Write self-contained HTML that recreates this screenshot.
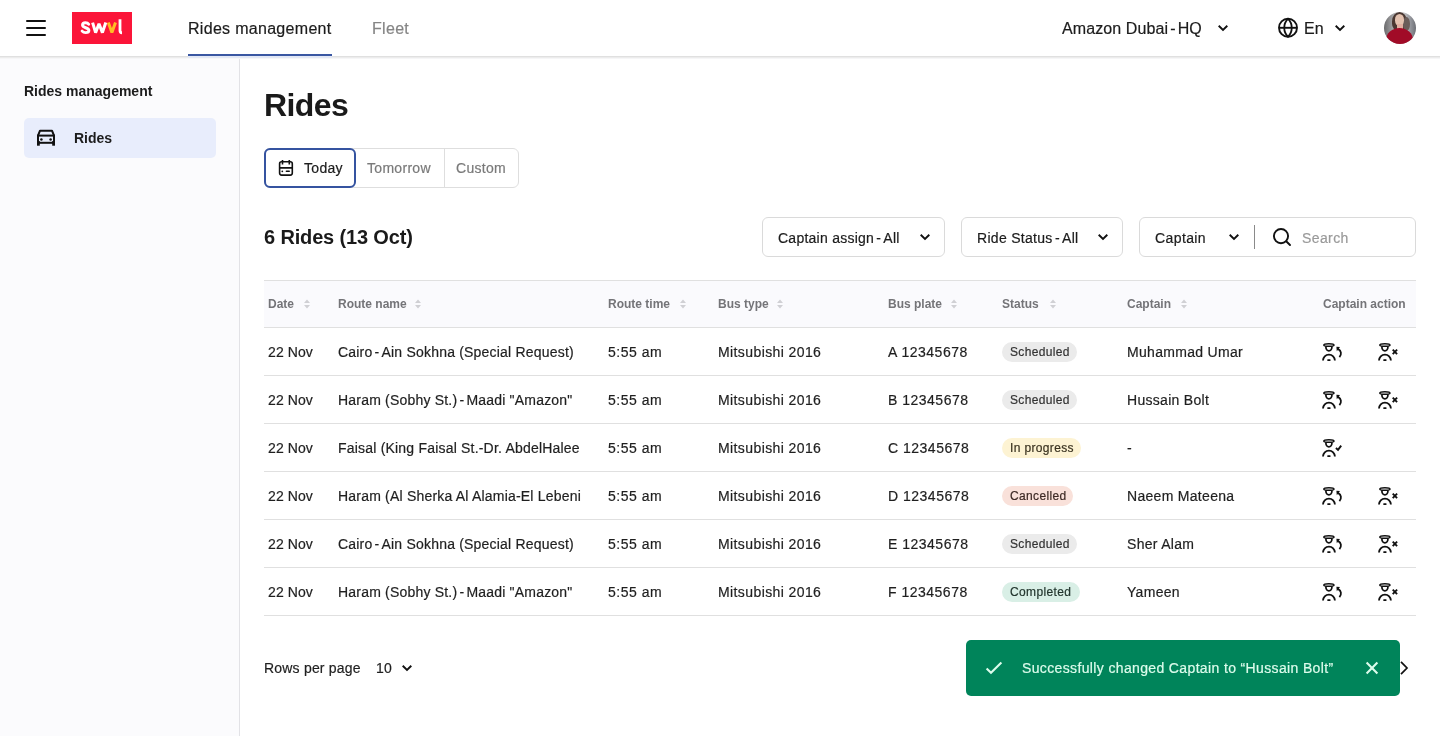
<!DOCTYPE html>
<html><head><meta charset="utf-8">
<style>
*{margin:0;padding:0;box-sizing:border-box}
html,body{width:1440px;height:736px;overflow:hidden;background:#fff;font-family:"Liberation Sans",sans-serif;color:#1c1c1c}
.a{position:absolute}
.t{position:absolute;white-space:nowrap;line-height:1;-webkit-text-stroke:0.2px currentColor}
#root{position:absolute;left:0;top:0;width:1440px;height:736px;will-change:transform}
svg{position:absolute;overflow:visible}
</style></head><body><div id="root">

<div class="a" style="left:0;top:56px;width:240px;height:680px;background:#fbfbfd"></div>
<div class="a" style="left:239px;top:56px;width:1px;height:680px;background:#e2e2e6"></div>
<div class="a" style="left:0;top:0;width:1440px;height:56px;background:#fff"></div>
<div class="a" style="left:0;top:56px;width:1440px;height:1px;background:#e0e0e0"></div>
<div class="a" style="left:0;top:57px;width:1440px;height:1px;background:#ececec"></div>
<div class="a" style="left:0;top:58px;width:1440px;height:1px;background:#f6f6f7"></div>
<div class="a" style="left:26px;top:20px;width:20px;height:2px;background:#111;border-radius:1px"></div>
<div class="a" style="left:26px;top:27px;width:20px;height:2px;background:#111;border-radius:1px"></div>
<div class="a" style="left:26px;top:34px;width:20px;height:2px;background:#111;border-radius:1px"></div>
<div class="a" style="left:72px;top:12px;width:60px;height:32px;background:#fb1539"></div>
<svg style="left:0;top:0" width="140" height="50" viewBox="0 0 140 50"><path d="M88.7 24.2 C87.9 23 86.6 22.7 85.5 22.7 C83.6 22.7 82.5 23.7 82.5 25.1 C82.5 28.5 88.9 27 88.9 30.5 C88.9 31.9 87.6 32.6 85.6 32.6 C84.2 32.6 83 32.1 82.1 31.1" fill="none" stroke="#fff" stroke-width="2.9" stroke-linecap="round"/><path d="M92.6 22.6 L95.6 32.6 L99 23.8 L102.4 32.6 L105.8 22.6" fill="none" stroke="#fff" stroke-width="3" stroke-linejoin="bevel" stroke-linecap="butt"/><path d="M108.3 22.6 L111.9 32.6 L115.5 22.6" fill="none" stroke="#ffbd24" stroke-width="3" stroke-linejoin="bevel"/><path d="M120 19.2 V30.6 C120 32.2 120.6 32.8 122 32.8" fill="none" stroke="#fff" stroke-width="2.8" stroke-linecap="butt"/></svg>
<div class="t" style="left:188px;top:21px;font-size:16px;letter-spacing:0.3px;color:#1c1c1c">Rides management</div>
<div class="a" style="left:188px;top:54px;width:144px;height:2px;background:#3a57a2"></div>
<div class="a" style="left:188px;top:56px;width:144px;height:2px;background:#e2e8f6"></div>
<div class="t" style="left:372px;top:21px;font-size:16px;letter-spacing:0.3px;color:#858585">Fleet</div>
<div class="t" style="left:1062px;top:21px;font-size:16px;letter-spacing:0.1px;color:#1c1c1c">Amazon Dubai<span style="word-spacing:-2.5px"> - </span>HQ</div>
<svg style="left:1217px;top:24px" width="12" height="8" viewBox="0 0 12 8"><path d="M1.7 1.8 L6 6 L10.3 1.8" fill="none" stroke="#111" stroke-width="1.9"/></svg>
<svg style="left:1278px;top:18px" width="20" height="20" viewBox="0 0 20 20"><circle cx="10" cy="9.8" r="9" fill="none" stroke="#111" stroke-width="1.9"/><path d="M10 0.9 C5 5.5 5 14.1 10 18.7 C15 14.1 15 5.5 10 0.9 Z" fill="none" stroke="#111" stroke-width="1.8"/><path d="M1 9.8 H19" stroke="#111" stroke-width="1.9"/></svg>
<div class="t" style="left:1304px;top:21px;font-size:16px;color:#1c1c1c">En</div>
<svg style="left:1334px;top:24px" width="12" height="8" viewBox="0 0 12 8"><path d="M1.7 1.8 L6 6 L10.3 1.8" fill="none" stroke="#111" stroke-width="1.9"/></svg>
<div class="a" style="left:1384px;top:12px;width:32px;height:32px;border-radius:50%;background:linear-gradient(90deg,#6a6a6c 0%,#a9a9ab 30%,#d9d6d6 55%,#9a9ca2 80%,#6e7076 100%);overflow:hidden">
  <div class="a" style="left:8px;top:0px;width:15px;height:19px;border-radius:50% 50% 40% 40%;background:#4a3832"></div>
  <div class="a" style="left:19px;top:5px;width:7px;height:14px;border-radius:50%;background:#6a5d5a"></div>
  <div class="a" style="left:10.5px;top:2px;width:9.5px;height:11.5px;border-radius:50%;background:#e3c2b0"></div>
  <div class="a" style="left:12.5px;top:12px;width:6px;height:5px;background:#e0b0a2"></div>
  <div class="a" style="left:2px;top:16px;width:27px;height:24px;border-radius:50%;background:#a10b27"></div>
</div>
<div class="t" style="left:24px;top:84px;font-size:14px;font-weight:bold;-webkit-text-stroke:0;color:#1c1c1c">Rides management</div>
<div class="a" style="left:24px;top:118px;width:192px;height:39.5px;border-radius:5px;background:#e8edfc"></div>
<svg style="left:35px;top:128px" width="22" height="20" viewBox="0 0 22 20"><path d="M3 7.6 L5 2.7 H17 L19 7.6" fill="none" stroke="#111" stroke-width="2" stroke-linejoin="round"/><rect x="3" y="7.6" width="16" height="7.2" fill="none" stroke="#111" stroke-width="2"/><rect x="2" y="13" width="2.8" height="4.7" fill="#111"/><rect x="17.2" y="13" width="2.8" height="4.7" fill="#111"/><circle cx="6.4" cy="11.4" r="1.25" fill="#111"/><circle cx="15.6" cy="11.4" r="1.25" fill="#111"/></svg>
<div class="t" style="left:74px;top:131px;font-size:14px;font-weight:bold;-webkit-text-stroke:0;color:#1c1c1c">Rides</div>
<div class="t" style="left:264px;top:89px;font-size:32px;letter-spacing:-0.6px;font-weight:bold;-webkit-text-stroke:0;color:#1a1a1a">Rides</div>
<div class="a" style="left:264px;top:148px;width:255px;height:40px;border:1px solid #dedede;border-radius:6px;background:#fff"></div>
<div class="a" style="left:444px;top:149px;width:1px;height:38px;background:#dedede"></div>
<div class="a" style="left:264px;top:148px;width:92px;height:40px;border:2px solid #3553a0;border-radius:6px;background:#fff"></div>
<svg style="left:277px;top:158px" width="18" height="20" viewBox="0 0 18 20"><rect x="2.6" y="3.8" width="12.7" height="13.3" rx="2" fill="none" stroke="#111" stroke-width="1.6"/><path d="M5.5 2 V6.6 M12.3 2 V6.6 M2.6 9.9 H15.3" stroke="#111" stroke-width="1.6"/><circle cx="5.3" cy="13.3" r="0.9" fill="#111"/><path d="M9.4 13.3 H12.2" stroke="#111" stroke-width="1.6" stroke-linecap="round"/></svg>
<div class="t" style="left:304px;top:161px;font-size:14px;letter-spacing:0.3px;color:#1c1c1c">Today</div>
<div class="t" style="left:367px;top:161px;font-size:14px;letter-spacing:0.3px;color:#7a7a7a">Tomorrow</div>
<div class="t" style="left:456px;top:161px;font-size:14px;letter-spacing:0.3px;color:#7a7a7a">Custom</div>
<div class="t" style="left:264px;top:227px;font-size:20px;letter-spacing:-0.15px;font-weight:bold;-webkit-text-stroke:0;color:#1a1a1a">6 Rides (13 Oct)</div>
<div class="a" style="left:762px;top:217px;width:183px;height:40px;border:1px solid #dadada;border-radius:6px;background:#fff"></div>
<div class="a" style="left:961px;top:217px;width:162px;height:40px;border:1px solid #dadada;border-radius:6px;background:#fff"></div>
<div class="a" style="left:1139px;top:217px;width:277px;height:40px;border:1px solid #dadada;border-radius:6px;background:#fff"></div>
<div class="t" style="left:778px;top:231px;font-size:14px;letter-spacing:0.25px;color:#1c1c1c">Captain assign<span style="word-spacing:-2px"> - </span>All</div>
<svg style="left:919px;top:233px" width="12" height="8" viewBox="0 0 12 8"><path d="M1.7 1.8 L6 6 L10.3 1.8" fill="none" stroke="#111" stroke-width="1.9"/></svg>
<div class="t" style="left:977px;top:231px;font-size:14px;letter-spacing:0.3px;color:#1c1c1c">Ride Status<span style="word-spacing:-2px"> - </span>All</div>
<svg style="left:1097px;top:233px" width="12" height="8" viewBox="0 0 12 8"><path d="M1.7 1.8 L6 6 L10.3 1.8" fill="none" stroke="#111" stroke-width="1.9"/></svg>
<div class="t" style="left:1155px;top:231px;font-size:14px;letter-spacing:0.4px;color:#1c1c1c">Captain</div>
<svg style="left:1228px;top:233px" width="12" height="8" viewBox="0 0 12 8"><path d="M1.7 1.8 L6 6 L10.3 1.8" fill="none" stroke="#111" stroke-width="1.9"/></svg>
<div class="a" style="left:1254px;top:225px;width:1px;height:24px;background:#8a8a8a"></div>
<svg style="left:1272px;top:228px" width="20" height="20" viewBox="0 0 20 20"><circle cx="9" cy="8.1" r="7.1" fill="none" stroke="#111" stroke-width="1.9"/><path d="M14.2 13.3 L18 17" stroke="#111" stroke-width="1.9" stroke-linecap="round"/></svg>
<div class="t" style="left:1302px;top:231px;font-size:14px;letter-spacing:0.4px;color:#9a9a9a">Search</div>
<div class="a" style="left:264px;top:280px;width:1152px;height:48px;background:#fafafd"></div>
<div class="a" style="left:264px;top:280px;width:1152px;height:1px;background:#e0e0e0"></div>
<div class="a" style="left:264px;top:327px;width:1152px;height:1px;background:#e0e0e0"></div>
<div class="t" style="left:268px;top:298px;font-size:12px;font-weight:bold;-webkit-text-stroke:0;color:#747478">Date</div>
<svg style="left:304px;top:299px" width="6" height="10" viewBox="0 0 6 10"><path d="M0 3.9 L3 0.6 L6 3.9 Z" fill="#d0d0d4"/><path d="M0 6.1 L3 9.4 L6 6.1 Z" fill="#d0d0d4"/></svg>
<div class="t" style="left:338px;top:298px;font-size:12px;font-weight:bold;-webkit-text-stroke:0;color:#747478">Route name</div>
<svg style="left:415px;top:299px" width="6" height="10" viewBox="0 0 6 10"><path d="M0 3.9 L3 0.6 L6 3.9 Z" fill="#d0d0d4"/><path d="M0 6.1 L3 9.4 L6 6.1 Z" fill="#d0d0d4"/></svg>
<div class="t" style="left:608px;top:298px;font-size:12px;font-weight:bold;-webkit-text-stroke:0;color:#747478">Route time</div>
<svg style="left:680px;top:299px" width="6" height="10" viewBox="0 0 6 10"><path d="M0 3.9 L3 0.6 L6 3.9 Z" fill="#d0d0d4"/><path d="M0 6.1 L3 9.4 L6 6.1 Z" fill="#d0d0d4"/></svg>
<div class="t" style="left:718px;top:298px;font-size:12px;font-weight:bold;-webkit-text-stroke:0;color:#747478">Bus type</div>
<svg style="left:777px;top:299px" width="6" height="10" viewBox="0 0 6 10"><path d="M0 3.9 L3 0.6 L6 3.9 Z" fill="#d0d0d4"/><path d="M0 6.1 L3 9.4 L6 6.1 Z" fill="#d0d0d4"/></svg>
<div class="t" style="left:888px;top:298px;font-size:12px;font-weight:bold;-webkit-text-stroke:0;color:#747478">Bus plate</div>
<svg style="left:951px;top:299px" width="6" height="10" viewBox="0 0 6 10"><path d="M0 3.9 L3 0.6 L6 3.9 Z" fill="#d0d0d4"/><path d="M0 6.1 L3 9.4 L6 6.1 Z" fill="#d0d0d4"/></svg>
<div class="t" style="left:1002px;top:298px;font-size:12px;font-weight:bold;-webkit-text-stroke:0;color:#747478">Status</div>
<svg style="left:1050px;top:299px" width="6" height="10" viewBox="0 0 6 10"><path d="M0 3.9 L3 0.6 L6 3.9 Z" fill="#d0d0d4"/><path d="M0 6.1 L3 9.4 L6 6.1 Z" fill="#d0d0d4"/></svg>
<div class="t" style="left:1127px;top:298px;font-size:12px;font-weight:bold;-webkit-text-stroke:0;color:#747478">Captain</div>
<svg style="left:1181px;top:299px" width="6" height="10" viewBox="0 0 6 10"><path d="M0 3.9 L3 0.6 L6 3.9 Z" fill="#d0d0d4"/><path d="M0 6.1 L3 9.4 L6 6.1 Z" fill="#d0d0d4"/></svg>
<div class="t" style="left:1323px;top:298px;font-size:12px;font-weight:bold;-webkit-text-stroke:0;color:#747478">Captain action</div>
<div class="t" style="left:268px;top:345px;font-size:14px;letter-spacing:0.1px;color:#1f1f1f">22 Nov</div>
<div class="t" style="left:338px;top:345px;font-size:14px;letter-spacing:0.2px;color:#1f1f1f">Cairo<span style="word-spacing:-2px"> - </span>Ain Sokhna (Special Request)</div>
<div class="t" style="left:608px;top:345px;font-size:14px;letter-spacing:0.5px;color:#1f1f1f">5:55 am</div>
<div class="t" style="left:718px;top:345px;font-size:14px;letter-spacing:0.4px;color:#1f1f1f">Mitsubishi 2016</div>
<div class="t" style="left:888px;top:345px;font-size:14px;letter-spacing:0.5px;color:#1f1f1f">A 12345678</div>
<div class="a" style="left:1002px;top:342px;width:75px;height:20px;border-radius:10px;background:#ebebeb"></div>
<div class="t" style="left:1010px;top:346px;font-size:12px;letter-spacing:0.35px;color:#333333">Scheduled</div>
<div class="t" style="left:1127px;top:345px;font-size:14px;letter-spacing:0.3px;color:#1f1f1f">Muhammad Umar</div>
<svg style="left:1320px;top:340px" width="24" height="24" viewBox="0 0 24 24"><ellipse cx="8.9" cy="5" rx="5.1" ry="1.35" fill="none" stroke="#111" stroke-width="1.5"/><path d="M5.9 6.3 V7 A3 3.9 0 0 0 11.9 7 V6.3" fill="none" stroke="#111" stroke-width="1.75"/><path d="M3 20.6 A5.95 5.95 0 0 1 14.9 20.6" fill="none" stroke="#111" stroke-width="1.85"/><rect x="7.2" y="19.3" width="3.4" height="1.6" rx="0.7" fill="#111"/><path d="M17.6 8.6 C21.6 10.8 21.8 14.4 19.4 17.2" fill="none" stroke="#111" stroke-width="1.8"/><path d="M16.4 6.7 L20 7.1 L16.8 11.2 Z" fill="#111"/></svg>
<svg style="left:1376px;top:340px" width="24" height="24" viewBox="0 0 24 24"><ellipse cx="8.9" cy="5" rx="5.1" ry="1.35" fill="none" stroke="#111" stroke-width="1.5"/><path d="M5.9 6.3 V7 A3 3.9 0 0 0 11.9 7 V6.3" fill="none" stroke="#111" stroke-width="1.75"/><path d="M3 20.6 A5.95 5.95 0 0 1 14.9 20.6" fill="none" stroke="#111" stroke-width="1.85"/><rect x="7.2" y="19.3" width="3.4" height="1.6" rx="0.7" fill="#111"/><path d="M16.7 9.7 L21.1 14.1 M21.1 9.7 L16.7 14.1" fill="none" stroke="#111" stroke-width="1.9"/></svg>
<div class="a" style="left:264px;top:375px;width:1152px;height:1px;background:#e0e0e0"></div>
<div class="t" style="left:268px;top:393px;font-size:14px;letter-spacing:0.1px;color:#1f1f1f">22 Nov</div>
<div class="t" style="left:338px;top:393px;font-size:14px;letter-spacing:0.2px;color:#1f1f1f">Haram (Sobhy St.)<span style="word-spacing:-2px"> - </span>Maadi "Amazon"</div>
<div class="t" style="left:608px;top:393px;font-size:14px;letter-spacing:0.5px;color:#1f1f1f">5:55 am</div>
<div class="t" style="left:718px;top:393px;font-size:14px;letter-spacing:0.4px;color:#1f1f1f">Mitsubishi 2016</div>
<div class="t" style="left:888px;top:393px;font-size:14px;letter-spacing:0.5px;color:#1f1f1f">B 12345678</div>
<div class="a" style="left:1002px;top:390px;width:75px;height:20px;border-radius:10px;background:#ebebeb"></div>
<div class="t" style="left:1010px;top:394px;font-size:12px;letter-spacing:0.35px;color:#333333">Scheduled</div>
<div class="t" style="left:1127px;top:393px;font-size:14px;letter-spacing:0.3px;color:#1f1f1f">Hussain Bolt</div>
<svg style="left:1320px;top:388px" width="24" height="24" viewBox="0 0 24 24"><ellipse cx="8.9" cy="5" rx="5.1" ry="1.35" fill="none" stroke="#111" stroke-width="1.5"/><path d="M5.9 6.3 V7 A3 3.9 0 0 0 11.9 7 V6.3" fill="none" stroke="#111" stroke-width="1.75"/><path d="M3 20.6 A5.95 5.95 0 0 1 14.9 20.6" fill="none" stroke="#111" stroke-width="1.85"/><rect x="7.2" y="19.3" width="3.4" height="1.6" rx="0.7" fill="#111"/><path d="M17.6 8.6 C21.6 10.8 21.8 14.4 19.4 17.2" fill="none" stroke="#111" stroke-width="1.8"/><path d="M16.4 6.7 L20 7.1 L16.8 11.2 Z" fill="#111"/></svg>
<svg style="left:1376px;top:388px" width="24" height="24" viewBox="0 0 24 24"><ellipse cx="8.9" cy="5" rx="5.1" ry="1.35" fill="none" stroke="#111" stroke-width="1.5"/><path d="M5.9 6.3 V7 A3 3.9 0 0 0 11.9 7 V6.3" fill="none" stroke="#111" stroke-width="1.75"/><path d="M3 20.6 A5.95 5.95 0 0 1 14.9 20.6" fill="none" stroke="#111" stroke-width="1.85"/><rect x="7.2" y="19.3" width="3.4" height="1.6" rx="0.7" fill="#111"/><path d="M16.7 9.7 L21.1 14.1 M21.1 9.7 L16.7 14.1" fill="none" stroke="#111" stroke-width="1.9"/></svg>
<div class="a" style="left:264px;top:423px;width:1152px;height:1px;background:#e0e0e0"></div>
<div class="t" style="left:268px;top:441px;font-size:14px;letter-spacing:0.1px;color:#1f1f1f">22 Nov</div>
<div class="t" style="left:338px;top:441px;font-size:14px;letter-spacing:0.2px;color:#1f1f1f">Faisal (King Faisal St.-Dr. AbdelHalee</div>
<div class="t" style="left:608px;top:441px;font-size:14px;letter-spacing:0.5px;color:#1f1f1f">5:55 am</div>
<div class="t" style="left:718px;top:441px;font-size:14px;letter-spacing:0.4px;color:#1f1f1f">Mitsubishi 2016</div>
<div class="t" style="left:888px;top:441px;font-size:14px;letter-spacing:0.5px;color:#1f1f1f">C 12345678</div>
<div class="a" style="left:1002px;top:438px;width:79px;height:20px;border-radius:10px;background:#fdf3d3"></div>
<div class="t" style="left:1010px;top:442px;font-size:12px;letter-spacing:0.35px;color:#3a3320">In progress</div>
<div class="t" style="left:1127px;top:441px;font-size:14px;letter-spacing:0.3px;color:#1f1f1f">-</div>
<svg style="left:1320px;top:436px" width="24" height="24" viewBox="0 0 24 24"><ellipse cx="8.9" cy="5" rx="5.1" ry="1.35" fill="none" stroke="#111" stroke-width="1.5"/><path d="M5.9 6.3 V7 A3 3.9 0 0 0 11.9 7 V6.3" fill="none" stroke="#111" stroke-width="1.75"/><path d="M3 20.6 A5.95 5.95 0 0 1 14.9 20.6" fill="none" stroke="#111" stroke-width="1.85"/><rect x="7.2" y="19.3" width="3.4" height="1.6" rx="0.7" fill="#111"/><path d="M15.9 12.1 L18 13.8 L21.2 9.6" fill="none" stroke="#111" stroke-width="1.9"/></svg>
<div class="a" style="left:264px;top:471px;width:1152px;height:1px;background:#e0e0e0"></div>
<div class="t" style="left:268px;top:489px;font-size:14px;letter-spacing:0.1px;color:#1f1f1f">22 Nov</div>
<div class="t" style="left:338px;top:489px;font-size:14px;letter-spacing:0.2px;color:#1f1f1f">Haram (Al Sherka Al Alamia-El Lebeni</div>
<div class="t" style="left:608px;top:489px;font-size:14px;letter-spacing:0.5px;color:#1f1f1f">5:55 am</div>
<div class="t" style="left:718px;top:489px;font-size:14px;letter-spacing:0.4px;color:#1f1f1f">Mitsubishi 2016</div>
<div class="t" style="left:888px;top:489px;font-size:14px;letter-spacing:0.5px;color:#1f1f1f">D 12345678</div>
<div class="a" style="left:1002px;top:486px;width:71px;height:20px;border-radius:10px;background:#f9e1da"></div>
<div class="t" style="left:1010px;top:490px;font-size:12px;letter-spacing:0.35px;color:#3d2a25">Cancelled</div>
<div class="t" style="left:1127px;top:489px;font-size:14px;letter-spacing:0.3px;color:#1f1f1f">Naeem Mateena</div>
<svg style="left:1320px;top:484px" width="24" height="24" viewBox="0 0 24 24"><ellipse cx="8.9" cy="5" rx="5.1" ry="1.35" fill="none" stroke="#111" stroke-width="1.5"/><path d="M5.9 6.3 V7 A3 3.9 0 0 0 11.9 7 V6.3" fill="none" stroke="#111" stroke-width="1.75"/><path d="M3 20.6 A5.95 5.95 0 0 1 14.9 20.6" fill="none" stroke="#111" stroke-width="1.85"/><rect x="7.2" y="19.3" width="3.4" height="1.6" rx="0.7" fill="#111"/><path d="M17.6 8.6 C21.6 10.8 21.8 14.4 19.4 17.2" fill="none" stroke="#111" stroke-width="1.8"/><path d="M16.4 6.7 L20 7.1 L16.8 11.2 Z" fill="#111"/></svg>
<svg style="left:1376px;top:484px" width="24" height="24" viewBox="0 0 24 24"><ellipse cx="8.9" cy="5" rx="5.1" ry="1.35" fill="none" stroke="#111" stroke-width="1.5"/><path d="M5.9 6.3 V7 A3 3.9 0 0 0 11.9 7 V6.3" fill="none" stroke="#111" stroke-width="1.75"/><path d="M3 20.6 A5.95 5.95 0 0 1 14.9 20.6" fill="none" stroke="#111" stroke-width="1.85"/><rect x="7.2" y="19.3" width="3.4" height="1.6" rx="0.7" fill="#111"/><path d="M16.7 9.7 L21.1 14.1 M21.1 9.7 L16.7 14.1" fill="none" stroke="#111" stroke-width="1.9"/></svg>
<div class="a" style="left:264px;top:519px;width:1152px;height:1px;background:#e0e0e0"></div>
<div class="t" style="left:268px;top:537px;font-size:14px;letter-spacing:0.1px;color:#1f1f1f">22 Nov</div>
<div class="t" style="left:338px;top:537px;font-size:14px;letter-spacing:0.2px;color:#1f1f1f">Cairo<span style="word-spacing:-2px"> - </span>Ain Sokhna (Special Request)</div>
<div class="t" style="left:608px;top:537px;font-size:14px;letter-spacing:0.5px;color:#1f1f1f">5:55 am</div>
<div class="t" style="left:718px;top:537px;font-size:14px;letter-spacing:0.4px;color:#1f1f1f">Mitsubishi 2016</div>
<div class="t" style="left:888px;top:537px;font-size:14px;letter-spacing:0.5px;color:#1f1f1f">E 12345678</div>
<div class="a" style="left:1002px;top:534px;width:75px;height:20px;border-radius:10px;background:#ebebeb"></div>
<div class="t" style="left:1010px;top:538px;font-size:12px;letter-spacing:0.35px;color:#333333">Scheduled</div>
<div class="t" style="left:1127px;top:537px;font-size:14px;letter-spacing:0.3px;color:#1f1f1f">Sher Alam</div>
<svg style="left:1320px;top:532px" width="24" height="24" viewBox="0 0 24 24"><ellipse cx="8.9" cy="5" rx="5.1" ry="1.35" fill="none" stroke="#111" stroke-width="1.5"/><path d="M5.9 6.3 V7 A3 3.9 0 0 0 11.9 7 V6.3" fill="none" stroke="#111" stroke-width="1.75"/><path d="M3 20.6 A5.95 5.95 0 0 1 14.9 20.6" fill="none" stroke="#111" stroke-width="1.85"/><rect x="7.2" y="19.3" width="3.4" height="1.6" rx="0.7" fill="#111"/><path d="M17.6 8.6 C21.6 10.8 21.8 14.4 19.4 17.2" fill="none" stroke="#111" stroke-width="1.8"/><path d="M16.4 6.7 L20 7.1 L16.8 11.2 Z" fill="#111"/></svg>
<svg style="left:1376px;top:532px" width="24" height="24" viewBox="0 0 24 24"><ellipse cx="8.9" cy="5" rx="5.1" ry="1.35" fill="none" stroke="#111" stroke-width="1.5"/><path d="M5.9 6.3 V7 A3 3.9 0 0 0 11.9 7 V6.3" fill="none" stroke="#111" stroke-width="1.75"/><path d="M3 20.6 A5.95 5.95 0 0 1 14.9 20.6" fill="none" stroke="#111" stroke-width="1.85"/><rect x="7.2" y="19.3" width="3.4" height="1.6" rx="0.7" fill="#111"/><path d="M16.7 9.7 L21.1 14.1 M21.1 9.7 L16.7 14.1" fill="none" stroke="#111" stroke-width="1.9"/></svg>
<div class="a" style="left:264px;top:567px;width:1152px;height:1px;background:#e0e0e0"></div>
<div class="t" style="left:268px;top:585px;font-size:14px;letter-spacing:0.1px;color:#1f1f1f">22 Nov</div>
<div class="t" style="left:338px;top:585px;font-size:14px;letter-spacing:0.2px;color:#1f1f1f">Haram (Sobhy St.)<span style="word-spacing:-2px"> - </span>Maadi "Amazon"</div>
<div class="t" style="left:608px;top:585px;font-size:14px;letter-spacing:0.5px;color:#1f1f1f">5:55 am</div>
<div class="t" style="left:718px;top:585px;font-size:14px;letter-spacing:0.4px;color:#1f1f1f">Mitsubishi 2016</div>
<div class="t" style="left:888px;top:585px;font-size:14px;letter-spacing:0.5px;color:#1f1f1f">F 12345678</div>
<div class="a" style="left:1002px;top:582px;width:78px;height:20px;border-radius:10px;background:#d9efe6"></div>
<div class="t" style="left:1010px;top:586px;font-size:12px;letter-spacing:0.35px;color:#23362e">Completed</div>
<div class="t" style="left:1127px;top:585px;font-size:14px;letter-spacing:0.3px;color:#1f1f1f">Yameen</div>
<svg style="left:1320px;top:580px" width="24" height="24" viewBox="0 0 24 24"><ellipse cx="8.9" cy="5" rx="5.1" ry="1.35" fill="none" stroke="#111" stroke-width="1.5"/><path d="M5.9 6.3 V7 A3 3.9 0 0 0 11.9 7 V6.3" fill="none" stroke="#111" stroke-width="1.75"/><path d="M3 20.6 A5.95 5.95 0 0 1 14.9 20.6" fill="none" stroke="#111" stroke-width="1.85"/><rect x="7.2" y="19.3" width="3.4" height="1.6" rx="0.7" fill="#111"/><path d="M17.6 8.6 C21.6 10.8 21.8 14.4 19.4 17.2" fill="none" stroke="#111" stroke-width="1.8"/><path d="M16.4 6.7 L20 7.1 L16.8 11.2 Z" fill="#111"/></svg>
<svg style="left:1376px;top:580px" width="24" height="24" viewBox="0 0 24 24"><ellipse cx="8.9" cy="5" rx="5.1" ry="1.35" fill="none" stroke="#111" stroke-width="1.5"/><path d="M5.9 6.3 V7 A3 3.9 0 0 0 11.9 7 V6.3" fill="none" stroke="#111" stroke-width="1.75"/><path d="M3 20.6 A5.95 5.95 0 0 1 14.9 20.6" fill="none" stroke="#111" stroke-width="1.85"/><rect x="7.2" y="19.3" width="3.4" height="1.6" rx="0.7" fill="#111"/><path d="M16.7 9.7 L21.1 14.1 M21.1 9.7 L16.7 14.1" fill="none" stroke="#111" stroke-width="1.9"/></svg>
<div class="a" style="left:264px;top:615px;width:1152px;height:1px;background:#e0e0e0"></div>
<div class="t" style="left:264px;top:661px;font-size:14px;letter-spacing:0.2px;color:#1f1f1f">Rows per page</div>
<div class="t" style="left:376px;top:661px;font-size:14px;letter-spacing:0.2px;color:#1f1f1f">10</div>
<svg style="left:401px;top:664px" width="12" height="8" viewBox="0 0 12 8"><path d="M1.7 1.8 L6 6 L10.3 1.8" fill="none" stroke="#111" stroke-width="1.9"/></svg>
<svg style="left:1399px;top:660px" width="10" height="16" viewBox="0 0 10 16"><path d="M2 1.8 L8 8 L2 14.2" fill="none" stroke="#111" stroke-width="1.7"/></svg>
<div class="a" style="left:966px;top:640px;width:434px;height:56px;border-radius:5px;background:#00845a"></div>
<svg style="left:984px;top:660px" width="20" height="16" viewBox="0 0 20 16"><path d="M2.6 8.4 L7 12.8 L17.4 2.6" fill="none" stroke="#dcfcec" stroke-width="2.1"/></svg>
<div class="t" style="left:1022px;top:661px;font-size:14px;letter-spacing:0.36px;color:#dcfcec">Successfully changed Captain to “Hussain Bolt”</div>
<svg style="left:1364px;top:660px" width="16" height="16" viewBox="0 0 16 16"><path d="M2.6 2.6 L13.4 13.4 M13.4 2.6 L2.6 13.4" fill="none" stroke="#dcfcec" stroke-width="2.1"/></svg>
</div></body></html>
